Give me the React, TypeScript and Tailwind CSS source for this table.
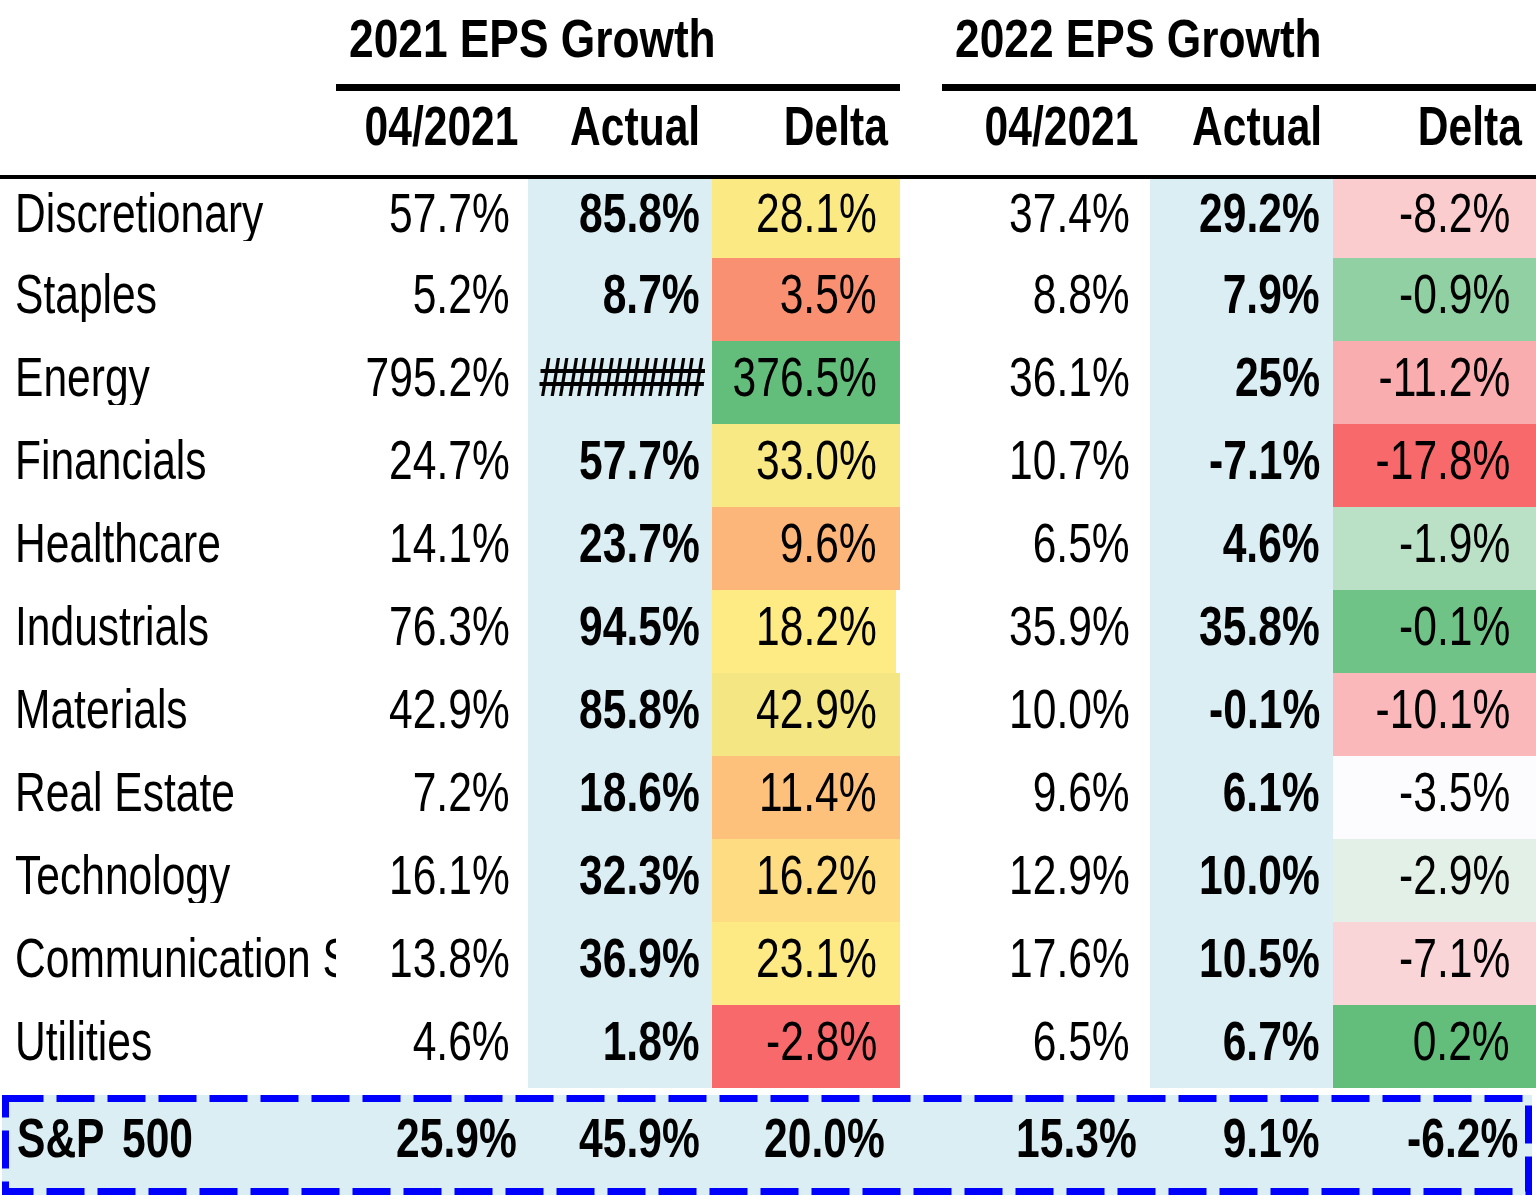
type Row = {
  label: string
  a: string
  b: string
  c: string
  cBg: string
  cNarrow?: boolean
  d: string
  e: string
  f: string
  fBg: string
}

const rows: Row[] = [
  { label: 'Discretionary', a: '57.7%', b: '85.8%', c: '28.1%', cBg: 'bg-[#FBEA84]', d: '37.4%', e: '29.2%', f: '-8.2%', fBg: 'bg-[#FACCCE]' },
  { label: 'Staples', a: '5.2%', b: '8.7%', c: '3.5%', cBg: 'bg-[#FA9072]', d: '8.8%', e: '7.9%', f: '-0.9%', fBg: 'bg-[#90D0A2]' },
  { label: 'Energy', a: '795.2%', b: '#########', c: '376.5%', cBg: 'bg-[#63BE7B]', d: '36.1%', e: '25%', f: '-11.2%', fBg: 'bg-[#FAADAF]' },
  { label: 'Financials', a: '24.7%', b: '57.7%', c: '33.0%', cBg: 'bg-[#F9E984]', d: '10.7%', e: '-7.1%', f: '-17.8%', fBg: 'bg-[#F8696B]' },
  { label: 'Healthcare', a: '14.1%', b: '23.7%', c: '9.6%', cBg: 'bg-[#FCB67A]', d: '6.5%', e: '4.6%', f: '-1.9%', fBg: 'bg-[#BAE1C6]' },
  { label: 'Industrials', a: '76.3%', b: '94.5%', c: '18.2%', cBg: 'bg-[#FFEB84]', cNarrow: true, d: '35.9%', e: '35.8%', f: '-0.1%', fBg: 'bg-[#6FC386]' },
  { label: 'Materials', a: '42.9%', b: '85.8%', c: '42.9%', cBg: 'bg-[#F4E683]', d: '10.0%', e: '-0.1%', f: '-10.1%', fBg: 'bg-[#FAB8BB]' },
  { label: 'Real Estate', a: '7.2%', b: '18.6%', c: '11.4%', cBg: 'bg-[#FDC17C]', d: '9.6%', e: '6.1%', f: '-3.5%', fBg: 'bg-[#FCFCFF]' },
  { label: 'Technology', a: '16.1%', b: '32.3%', c: '16.2%', cBg: 'bg-[#FEDC82]', d: '12.9%', e: '10.0%', f: '-2.9%', fBg: 'bg-[#E3F0E8]' },
  { label: 'Communication Services', a: '13.8%', b: '36.9%', c: '23.1%', cBg: 'bg-[#FDEA84]', d: '17.6%', e: '10.5%', f: '-7.1%', fBg: 'bg-[#FAD5D8]' },
  { label: 'Utilities', a: '4.6%', b: '1.8%', c: '-2.8%', cBg: 'bg-[#F8696B]', d: '6.5%', e: '6.7%', f: '0.2%', fBg: 'bg-[#63BE7B]' },
]

// Arial Narrow is not installed, so squeeze Liberation Sans to its width
function N({ children, left, title }: { children: React.ReactNode; left?: boolean; title?: boolean }) {
  return (
    <span
      className={`inline-block shrink-0 whitespace-nowrap ${title ? 'scale-x-[0.82]' : 'scale-x-[0.76]'} ${
        left ? 'origin-left' : 'origin-right'
      }`}
    >
      {children}
    </span>
  )
}

function DataRow({ row, first }: { row: Row; first: boolean }) {
  const isHash = row.b.startsWith('#')
  return (
    <div className={`flex ${first ? 'h-[79px]' : 'h-[83px]'}`}>
      <div className="flex w-[336px] items-center pb-[12px] pl-[15px]">
        <div className="w-[321px] overflow-hidden whitespace-nowrap">
          <N left>{row.label}</N>
        </div>
      </div>
      <div className="flex w-[192px] items-center justify-end pb-[12px] pr-[18px]">
        <N>{row.a}</N>
      </div>
      <div className={`flex w-[184px] items-center justify-end bg-[#DAEEF3] pb-[12px] font-bold ${isHash ? 'pr-[12px]' : 'pr-[12px]'}`}>
        {isHash ? (
          <N>
            <span className="tracking-[-7.6px]">{row.b}</span>
          </N>
        ) : (
          <N>{row.b}</N>
        )}
      </div>
      {row.cNarrow ? (
        <>
          <div className={`flex w-[184px] items-center justify-end pb-[12px] pr-[19px] ${row.cBg}`}>
            <N>{row.c}</N>
          </div>
          <div className="w-[4px]" />
        </>
      ) : (
        <div className={`flex w-[188px] items-center justify-end pb-[12px] pr-[23px] ${row.cBg}`}>
          <N>{row.c}</N>
        </div>
      )}
      <div className="flex w-[250px] items-center justify-end pb-[12px] pr-[20px]">
        <N>{row.d}</N>
      </div>
      <div className="flex w-[183px] items-center justify-end bg-[#DAEEF3] pb-[12px] pr-[13px] font-bold">
        <N>{row.e}</N>
      </div>
      <div className={`flex w-[203px] items-center justify-end pb-[12px] pr-[26px] ${row.fBg}`}>
        <N>{row.f}</N>
      </div>
    </div>
  )
}

export default function App() {
  return (
    <div className="h-[1197px] w-[1536px] overflow-hidden bg-white font-['Liberation_Sans','Arial',sans-serif] text-[56px] leading-[56px] text-black">
      {/* group titles */}
      <div className="flex h-[84px] text-[54px] font-bold leading-[54px]">
        <div className="w-[336px]" />
        <div className="w-[564px] pl-[13px] pt-[11px]">
          <N left title>2021 EPS Growth</N>
        </div>
        <div className="w-[42px]" />
        <div className="w-[594px] pl-[13px] pt-[11px]">
          <N left title>2022 EPS Growth</N>
        </div>
      </div>
      <div className="flex h-[7px]">
        <div className="w-[336px]" />
        <div className="w-[564px] bg-black" />
        <div className="w-[42px]" />
        <div className="w-[594px] bg-black" />
      </div>

      {/* column headers */}
      <div className="flex h-[84px] items-start pt-[7px] font-bold">
        <div className="w-[336px]" />
        <div className="flex w-[192px] justify-end pr-[10px]"><N>04/2021</N></div>
        <div className="flex w-[184px] justify-end pr-[12px]"><N>Actual</N></div>
        <div className="flex w-[188px] justify-end pr-[12px]"><N>Delta</N></div>
        <div className="flex w-[250px] justify-end pr-[12px]"><N>04/2021</N></div>
        <div className="flex w-[183px] justify-end pr-[11px]"><N>Actual</N></div>
        <div className="flex w-[203px] justify-end pr-[14px]"><N>Delta</N></div>
      </div>
      <div className="h-[4px] bg-black" />

      {rows.map((row, i) => (
        <DataRow key={row.label} row={row} first={i === 0} />
      ))}

      <div className="h-[7px]" />

      {/* index total */}
      <div className="relative mx-[2px] flex h-[100px] w-[1530px] bg-[#DAEEF3] font-bold">
        <div className="flex w-[334px] items-center pb-[15px] pl-[15px]">
          <N left>
            S&amp;P<span className="ml-[23px]">500</span>
          </N>
        </div>
        <div className="flex w-[192px] items-center justify-end pb-[15px] pr-[11px]"><N>25.9%</N></div>
        <div className="flex w-[184px] items-center justify-end pb-[15px] pr-[12px]"><N>45.9%</N></div>
        <div className="flex w-[188px] items-center justify-end pb-[15px] pr-[15px]"><N>20.0%</N></div>
        <div className="flex w-[250px] items-center justify-end pb-[15px] pr-[13px]"><N>15.3%</N></div>
        <div className="flex w-[183px] items-center justify-end pb-[15px] pr-[13px]"><N>9.1%</N></div>
        <div className="flex w-[199px] items-center justify-end pb-[15px] pr-[14px]"><N>-6.2%</N></div>
        <svg className="pointer-events-none absolute inset-0" width="1530" height="100" viewBox="0 0 1530 100">
          <rect x="3.5" y="3.5" width="1523" height="93" fill="none" stroke="#0000FF" strokeWidth="7" strokeDasharray="38 13" />
        </svg>
      </div>
    </div>
  )
}
